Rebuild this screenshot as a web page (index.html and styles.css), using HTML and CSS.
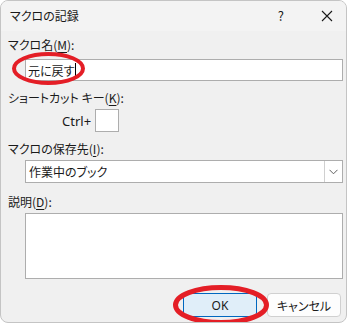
FILE: index.html
```html
<!DOCTYPE html>
<html lang="ja">
<head>
<meta charset="utf-8">
<link rel="stylesheet" href="styles.css">
</head>
<body>
<div class="window">
  <div class="titlebar">
    <span class="title">マクロの記録</span>
    <span class="help">?</span>
    <svg class="close" width="12" height="12" viewBox="0 0 12 12"><path d="M1 1 L11 11 M11 1 L1 11" stroke="#1a1a1a" stroke-width="1.1" fill="none"/></svg>
  </div>
  <div class="content">
    <div class="label l1">マクロ名(<u>M</u>):</div>
    <div class="field input"><span>元に戻す</span><span class="caret"></span></div>
    <div class="label l2">ショートカット キー(<u>K</u>):</div>
    <div class="ctrl-row"><span class="ctrl">Ctrl+</span><div class="keybox"></div></div>
    <div class="label l3">マクロの保存先(<u>I</u>):</div>
    <div class="field select"><span class="sel-text">作業中のブック</span><span class="sel-btn"><svg width="9" height="6" viewBox="0 0 9 6"><path d="M0.5 0.8 L4.5 4.8 L8.5 0.8" stroke="#606060" stroke-width="1" fill="none"/></svg></span></div>
    <div class="label l4">説明(<u>D</u>):</div>
    <div class="field textarea"></div>
    <div class="buttons">
      <div class="btn ok">OK</div>
      <div class="btn cancel">キャンセル</div>
    </div>
  </div>
  <svg class="mark" width="350" height="327" viewBox="0 0 350 327">
    <ellipse cx="48.5" cy="68.5" rx="34.5" ry="14.5" stroke="#e41e26" stroke-width="4" fill="none"/>
    <ellipse cx="221" cy="305" rx="45.5" ry="17.5" stroke="#e41e26" stroke-width="5" fill="none"/>
  </svg>
</div>
</body>
</html>
```
FILE: styles.css
```css
html, body {
  margin: 0;
  padding: 0;
  background: #ffffff;
}
body {
  width: 350px;
  height: 327px;
  overflow: hidden;
  font-family: "Noto Sans CJK JP", "Noto Sans", sans-serif;
  font-size: 12px;
  color: #1a1a1a;
  font-feature-settings: "palt";
}
.window {
  position: relative;
  box-sizing: border-box;
  width: 347px;
  height: 323px;
  border: 1px solid #c4c4c4;
  border-radius: 8px;
  background: #f0f0f0;
  overflow: hidden;
}
.titlebar {
  height: 30px;
  background: #f3f3f3;
  display: flex;
  align-items: center;
  padding-left: 9px;
  padding-right: 13px;
}
.title {
  font-size: 12px;
  line-height: 16px;
  flex: 1;
}
.help {
  font-size: 13px;
  margin-right: 37px;
  line-height: 16px;
}
.close {
  display: block;
}
.content {
  display: flex;
  flex-direction: column;
  padding-left: 7px;
  padding-right: 3px;
}
.label {
  height: 16px;
  line-height: 16px;
}
.label u {
  text-decoration-thickness: 1px;
  text-underline-offset: 2px;
}
.l1 { margin-top: 6px; }
.l2 { margin-top: 9px; }
.l3 { margin-top: 9px; }
.l4 { margin-top: 11px; }
.field {
  box-sizing: border-box;
  margin-left: 17px;
  background: #ffffff;
  border: 1px solid #adadad;
}
.input {
  margin-top: 6px;
  height: 22px;
  display: flex;
  align-items: center;
  padding-left: 2px;
}
.caret {
  display: inline-block;
  width: 1px;
  height: 15px;
  background: #000;
  margin-left: 1px;
}
.ctrl-row {
  margin-top: 3px;
  display: flex;
  align-items: center;
  padding-left: 54px;
}
.ctrl {
  margin-right: 4px;
  font-family: "Noto Sans", sans-serif;
  font-size: 13px;
}
.keybox {
  box-sizing: border-box;
  width: 24px;
  height: 23px;
  background: #fff;
  border: 1px solid #adadad;
}
.select {
  margin-top: 3px;
  height: 23px;
  display: flex;
  align-items: stretch;
}
.sel-text {
  flex: 1;
  line-height: 21px;
  padding-left: 3px;
}
.sel-btn {
  width: 17px;
  border-left: 1px solid #d0d0d0;
  display: flex;
  align-items: center;
  justify-content: center;
}
.textarea {
  margin-top: 3px;
  height: 66px;
}
.buttons {
  margin-top: 14px;
  display: flex;
  justify-content: flex-end;
  gap: 10px;
  padding-right: 2px;
}
.btn {
  box-sizing: border-box;
  width: 74px;
  height: 24px;
  display: flex;
  align-items: center;
  justify-content: center;
  border-radius: 4px;
}
.ok {
  background: #e0eef9;
  border: 1px solid #0067c0;
  font-family: "Noto Sans", sans-serif;
}
.cancel {
  background: #fdfdfd;
  border: 1px solid #d0d0d0;
}
.mark {
  position: absolute;
  left: -1px;
  top: -1px;
  pointer-events: none;
}
```
